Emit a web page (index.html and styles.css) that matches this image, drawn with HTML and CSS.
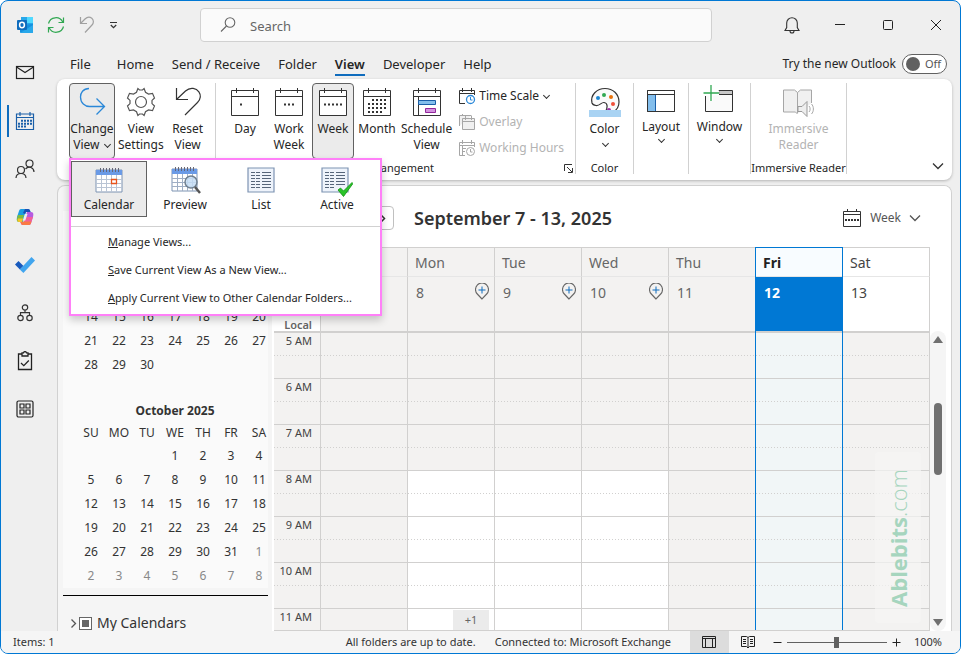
FILE: index.html
```html
<!DOCTYPE html>
<html lang="en">
<head>
<meta charset="utf-8">
<title>Calendar - Outlook</title>
<link rel="stylesheet" href="styles.css">
</head>
<body>
<div class="app">
  <header class="titlebar">
    <div class="quick">
      <svg class="i18" viewBox="0 0 18 18"><rect x="5" y="1" width="12" height="12" fill="#28a8ea"/><rect x="11" y="1" width="6" height="6" fill="#50d9ff"/><rect x="5" y="7" width="6" height="6" fill="#0364b8"/><path d="M4 9l13-1v8a1 1 0 0 1-1 1H5a1 1 0 0 1-1-1z" fill="#1490df"/><path d="M4 17l13-8v7a1 1 0 0 1-1 1z" fill="#28a8ea"/><rect x="1" y="4" width="10" height="10" rx="1" fill="#0f6cbd"/><ellipse cx="6" cy="9" rx="2.400" ry="2.700" fill="none" stroke="#fff" stroke-width="1.500"/></svg>
      <button class="plain" aria-label="Send and receive"><svg class="i18" viewBox="0 0 18 18" fill="none" stroke="#31a852" stroke-width="1.200"><path d="M1.500 7.500a7.600 7.600 0 0 1 14.200-1.500M16.500 1.500v5h-5M16.500 10.500a7.600 7.600 0 0 1-14.200 1.500M1.500 16.500v-5h5"/></svg></button>
      <button class="plain" aria-label="Undo"><svg class="i18" viewBox="0 0 18 18" fill="none" stroke="#a0a0a0" stroke-width="1.200"><path d="M2.500 1v6.500H9M2.500 7.500L7 3c2.500-2.500 5-2.200 6.800-.8 2 1.700 2.100 4.800.2 6.800L7 16.500"/></svg></button>
      <button class="plain" aria-label="Customize"><svg class="i9" viewBox="0 0 9 9" fill="none" stroke="#333" stroke-width="1.200"><path d="M1 1.500h7M1.800 4l2.700 2.700L7.200 4"/></svg></button>
    </div>
    <label class="search">
      <svg class="i18" viewBox="0 0 18 18" fill="none" stroke="#666" stroke-width="1.100"><circle cx="11" cy="6.500" r="4.800"/><path d="M7.500 10L2 15.500"/></svg>
      <input type="text" placeholder="Search" aria-label="Search">
    </label>
    <div class="window-buttons">
      <button aria-label="Notifications"><svg class="i18" viewBox="0 0 18 18" fill="none" stroke="#333" stroke-width="1.100"><path d="M2 14.500h14L14.300 11.500V7a5.300 5.300 0 0 0-10.600 0v4.500zM7 15a2 2 0 0 0 4 0"/></svg></button>
      <button aria-label="Minimize"><svg class="i12" viewBox="0 0 12 12" stroke="#222"><path d="M1 5.500h10"/></svg></button>
      <button aria-label="Maximize"><svg class="i12" viewBox="0 0 12 12" stroke="#222" fill="none"><rect x="1.500" y="1.500" width="9" height="9" rx="1"/></svg></button>
      <button aria-label="Close"><svg class="i12" viewBox="0 0 12 12" stroke="#222"><path d="M1 1l10 10M11 1L1 11"/></svg></button>
    </div>
  </header>

  <div class="shell">
    <nav class="rail" aria-label="Modules">
      <button aria-label="Mail"><svg class="i20" viewBox="0 0 20 20" fill="none" stroke="#222" stroke-width="1.200"><rect x="1.500" y="3.500" width="17" height="12"/><path d="M1.500 4l8.500 5.500 8.500-5.500"/></svg></button>
      <button class="current" aria-label="Calendar"><svg class="i20" viewBox="0 0 20 20" fill="none" stroke="#1a5fa8" stroke-width="1.200"><path d="M1.500 3h17v15.500h-17zM1.500 6.500h17M5 1v4M15 1v4"/><path stroke-width="2" stroke-dasharray="2 1" d="M6 9.800h11M3 12.800h14M3 15.500h8"/></svg></button>
      <button aria-label="People"><svg class="i20" viewBox="0 0 20 20" fill="none" stroke="#333" stroke-width="1.200"><circle cx="6" cy="11" r="3.500"/><circle cx="14.500" cy="4.500" r="3.500"/><path d="M1 19c.3-6 9.700-6 10 0M10.500 10c3-3.500 8.500-1.500 8.500 3"/></svg></button>
      <button aria-label="Copilot"><svg class="i20" viewBox="0 0 20 20"><path d="M6 2h7c1.500 0 2 1 2.500 3H11L8 15H4.500C1 15 2 11 2 10L4 4c.4-1.300 1-2 2-2z" fill="#1b9de2"/><path d="M3 8h6l-2 7H4c-3 0-2.500-3-1-7z" fill="#7dbb42"/><path d="M3 11.500h5L7 15H4c-1.500 0-2-2-1-3.500z" fill="#f5c529"/><path d="M10 2h3c1.500 0 2 1 2.500 3H11l-1 2-2-1z" fill="#1a4fb5"/><path d="M12 5h4c3 0 2.500 3 2 5l-2 6c-.5 1.500-1 2-2.500 2H8c-1.500 0-2-1-2.500-3H9z" fill="#b65be0"/><path d="M11 10h7l-2 6c-.5 1.500-1 2-2.500 2H8c-1.500 0-2-1-2.500-3H9z" fill="#f0609a"/><path d="M8.500 14.500h8c-.6 2.500-1.300 3.500-3 3.500H8c-1.500 0-2-1-2.500-3z" fill="#fa7a45"/><path d="M9.800 7h2.700l-2.200 6.500H7.800z" fill="#efefef"/></svg></button>
      <button aria-label="To Do"><svg class="i20" viewBox="0 0 20 20"><path d="M0 9.500l3.500-3.600 5 5-3.600 3.600z" fill="#185abd"/><path d="M4.800 14.400L16.500 2 20 5.500 8.400 18z" fill="#41a5ee"/></svg></button>
      <button aria-label="Org Explorer"><svg class="i20" viewBox="0 0 20 20" fill="none" stroke="#333" stroke-width="1.200"><circle cx="10" cy="4.500" r="2.700"/><circle cx="5.500" cy="15" r="2.700"/><circle cx="14.500" cy="15" r="2.700"/><path d="M10 7.200v2.500M5.500 12.300V9.700h9v2.600"/></svg></button>
      <button aria-label="Tasks"><svg class="i20" viewBox="0 0 20 20" fill="none" stroke="#222" stroke-width="1.300"><path d="M7 3H3.500v15.500h13V3H13M7 1.800h1.500c.5-1.600 2.500-1.600 3 0H13V5H7zM6 12l2.800 2.700 5-5.200"/></svg></button>
      <button aria-label="More apps"><svg class="i20" viewBox="0 0 20 20" fill="none" stroke="#222" stroke-width="1.200"><rect x="2" y="2" width="16" height="16" rx="1.500"/><path d="M5 5h4v4H5zM11 5h4v4h-4zM5 11h4v4H5zM11 11h4v4h-4z"/></svg></button>
    </nav>

    <main class="main">
      <div class="tabs">
        <nav class="tab-list" aria-label="Ribbon tabs">
          <a class="first" href="#">File</a><a href="#">Home</a><a href="#">Send / Receive</a><a href="#">Folder</a><a class="active" href="#">View</a><a href="#">Developer</a><a href="#">Help</a>
        </nav>
        <label class="try">Try the new Outlook <span class="toggle"><input type="checkbox" role="switch" aria-label="Try the new Outlook"><span>Off</span></span></label>
      </div>

      <section class="ribbon" aria-label="View ribbon">
        <div class="group g-view">
          <div class="tools">
            <div class="drop">
              <button class="tool on"><svg class="i32" viewBox="0 0 32 32" fill="none" stroke="#2b88d8" stroke-width="1.300"><path d="M13 3.500C7 3.500 4.500 8 4.500 12c0 6 4.500 9.500 9 9.500h15M20.500 13.500l8 8-8 8"/></svg><span>Change<br>View <i class="chev"></i></span></button>
              <div class="menu">
                <div class="tiles">
                  <button class="tile sel"><svg class="i32" viewBox="0 0 32 32"><path d="M3 5h26v22H3z" fill="#fff" stroke="#7d93b2"/><path d="M3 5h26v5H3z" fill="#6a9ae6"/><path d="M3 14.500h26M3 18.500h26M3 22.500h26M8.500 10v17M13.500 10v17M18.500 10v17M23.500 10v17" stroke="#b9c4d4" fill="none"/><path d="M7.500 3v4M10.500 3v4M13.500 3v4M16.500 3v4M19.500 3v4M22.500 3v4M25.500 3v4" stroke="#667"/><path d="M18.500 14.500h5v4h-5z" fill="#fff" stroke="#e8541c" stroke-width="1.300"/></svg>Calendar</button>
                  <button class="tile"><svg class="i32" viewBox="0 0 32 32"><path d="M3 4h25v22H3z" fill="#fff" stroke="#7d93b2"/><path d="M3 4h25v5H3z" fill="#6a9ae6"/><path d="M3 13.500h25M3 17.500h25M3 21.500h25M8.500 9v17M13.500 9v17M18.500 9v17M23.500 9v17" stroke="#9faec4" fill="none"/><path d="M6.500 2v4M9.500 2v4M12.500 2v4M15.500 2v4M18.500 2v4M21.500 2v4M24.500 2v4" stroke="#667"/><circle cx="22" cy="17" r="6" fill="#c5ddf5" fill-opacity=".85" stroke="#71808f" stroke-width="1.500"/><path d="M26 22l5 6" stroke="#555" stroke-width="2.500"/></svg>Preview</button>
                  <button class="tile"><svg class="i32" viewBox="0 0 32 32"><path d="M3 3h26v24H3z" fill="#eef3fb" stroke="#7d93b2" stroke-width="1.200"/><path d="M6 7.500h9M6 10.500h9M6 13.500h9M6 16.500h9M6 19.500h9M6 22.500h9" stroke="#56657a" stroke-dasharray="4 1"/><path d="M17 7.500h9M17 10.500h9M17 13.500h9M17 16.500h9M17 19.500h9M17 22.500h9" stroke="#56657a"/></svg>List</button>
                  <button class="tile"><svg class="i32" viewBox="0 0 32 32"><path d="M1 3h26v24H1z" fill="#eef3fb" stroke="#7d93b2" stroke-width="1.200"/><path d="M4 7.500h9M4 10.500h9M4 13.500h9M4 16.500h9M4 19.500h9M4 22.500h9" stroke="#56657a" stroke-dasharray="4 1"/><path d="M15 7.500h9M15 10.500h9M15 13.500h9M15 16.500h9M15 19.500h9" stroke="#56657a"/><path d="M17 25l2.500-2 3 3L31 17.500l1 1-9.500 13z" fill="#29c429" stroke="#119011" stroke-width=".8"/></svg>Active</button>
                </div>
                <button class="item"><u>M</u>anage Views...</button>
                <button class="item"><u>S</u>ave Current View As a New View...</button>
                <button class="item"><u>A</u>pply Current View to Other Calendar Folders...</button>
              </div>
            </div>
            <button class="tool"><svg class="i32" viewBox="0 0 32 32" fill="none" stroke="#555" stroke-width="1.200"><circle cx="16" cy="17" r="5.500"/><path d="M12.900 3.500L11.500 7.300L8.500 9L4.500 8.300L2.500 13L5 15.400V18.600L2.500 21L4.500 25.700L8.500 25L11.500 26.700L12.900 30.500L14.500 29H17.500L19.100 30.500L20.500 26.700L23.500 25L27.500 25.700L29.500 21L27 18.600V15.400L29.500 13L27.500 8.300L23.500 9L20.500 7.300L19.100 3.500L17.500 5H14.500z"/></svg><span>View<br>Settings</span></button>
            <button class="tool"><svg class="i32" viewBox="0 0 32 32" fill="none" stroke="#333" stroke-width="1.200"><path d="M4.500 3v11.500H16M4.500 14.500l9-8.500c5-4.500 11-2.600 13.400.8 2.500 3.700 1.300 7.700-1.400 10.700L13 30"/></svg><span>Reset<br>View</span></button>
          </div>
        </div>

        <div class="group g-arrange">
          <div class="tools">
            <button class="tool"><svg class="i32" viewBox="0 0 32 32" fill="none" stroke="#333"><path fill="#fff" d="M2.500 5.500h27v25h-27z"/><path d="M2.500 11.500h27M7.500 3v5M24.500 3v5"/><path stroke-width="2" d="M11 19.500h2"/></svg><span>Day</span></button>
            <button class="tool"><svg class="i32" viewBox="0 0 32 32" fill="none" stroke="#333"><path fill="#fff" d="M2.500 5.500h27v25h-27z"/><path d="M2.500 11.500h27M7.500 3v5M24.500 3v5"/><path stroke-width="2" stroke-dasharray="2 2" d="M11 19.500h10"/></svg><span>Work<br>Week</span></button>
            <button class="tool on"><svg class="i32" viewBox="0 0 32 32" fill="none" stroke="#333"><path fill="#fff" d="M2.500 5.500h27v25h-27z"/><path d="M2.500 11.500h27M7.500 3v5M24.500 3v5"/><path stroke-width="2" stroke-dasharray="2 2" d="M7 19.500h18"/></svg><span>Week</span></button>
            <button class="tool"><svg class="i32" viewBox="0 0 32 32" fill="none" stroke="#333"><path fill="#fff" d="M2.500 5.500h27v25h-27z"/><path d="M2.500 11.500h27M7.500 3v5M24.500 3v5"/><path stroke-width="2" stroke-dasharray="2 2" d="M11 15h14M7 19h18M7 23h18M7 27h14"/></svg><span>Month</span></button>
            <button class="tool wide"><svg class="i32" viewBox="0 0 32 32" fill="none" stroke="#333"><path fill="#fff" d="M2.500 5.500h27v25h-27z"/><path d="M2.500 11.500h27M7.500 3v5M24.500 3v5M7.500 12v18"/><path d="M7.500 15.500h17v4h-17z" fill="#83beec" stroke="#1a5fa8"/><path d="M14.500 23.500h10v4h-10z" fill="#d392de" stroke="#92279c"/></svg><span>Schedule<br>View</span></button>
            <div class="stack">
              <button><svg class="i18" viewBox="0 0 18 18" fill="none" stroke="#333"><path d="M7 16.500H1.500v-13h15V8M1.500 6.500h15M4.500 1v4M13.500 1v4"/><circle cx="12.500" cy="12.500" r="4" fill="#fff" stroke="#2b88d8" stroke-width="1.300"/><path d="M12.500 10v3h2" stroke="#2b88d8"/></svg>Time Scale <i class="chev"></i></button>
              <button disabled><svg class="i18" viewBox="0 0 18 18" fill="#f0f0f0" stroke="#a6a6a6"><path d="M1.500 13V2.500h12"/><path d="M4.500 5.500h12v11h-12zM4.500 8.500h12M7.500 3v4M13.500 3v4M4.500 1v2"/></svg>Overlay</button>
              <button disabled><svg class="i18" viewBox="0 0 18 18" fill="none" stroke="#a6a6a6"><path d="M7 16.500H1.500v-13h15V8M1.500 6.500h15M4.500 1v4M13.500 1v4M4.500 7v9M5 9.500h3M5 12.500h2"/><circle cx="12.500" cy="12.500" r="4" fill="#fff"/><path d="M12.500 10v3h2"/></svg>Working Hours</button>
            </div>
          </div>
          <div class="caption">Arrangement<button class="plain launch" aria-label="Arrangement options"><svg class="i9" viewBox="0 0 9 9" fill="none" stroke="#333"><path d="M.5 7V.5H8M3 3l5 5M8.500 4v4.500H4"/></svg></button></div>
        </div>

        <div class="group g-color">
          <div class="tools">
            <button class="tool"><svg class="i32" viewBox="0 0 32 32"><path d="M3 18C1 10 8 3.500 16 3.500S30 9 30 17c0 5-2 8-6 10h-8c3-4 3-9-1-9.500-3-.3-4 3.500-8 3-2-.3-3.500-1-4-2.500z" fill="#fafafa" stroke="#333" stroke-width="1.200"/><circle cx="9" cy="13" r="2" fill="#1e88d2"/><circle cx="15" cy="10" r="2" fill="#31a852"/><circle cx="22" cy="12" r="2" fill="#e8730c"/><circle cx="24" cy="19" r="2" fill="#f0503a"/><circle cx="20" cy="25" r="2" fill="#9a30a8"/><path d="M0 25h32v8H0z" fill="#a9d3f3"/></svg><span>Color</span><i class="chev"></i></button>
          </div>
          <div class="caption">Color</div>
        </div>
        <div class="group g-layout">
          <div class="tools">
            <button class="tool short"><svg class="i32" viewBox="0 0 32 32" fill="#fff" stroke="#333"><path d="M2.500 5.500h27v21h-27z"/><path d="M3 9.500h7.500v17H3z" fill="#83beec" stroke="none"/><path d="M2.500 9.500h27M2.500 5.500h27v21h-27z" fill="none"/><path d="M10.500 10v16" stroke="#1a5fa8"/></svg><span>Layout</span><i class="chev"></i></button>
          </div>
        </div>
        <div class="group g-window">
          <div class="tools">
            <button class="tool short"><svg class="i32" viewBox="0 0 32 32" fill="none" stroke="#333"><path d="M2.500 11v15.500h27v-21H16v4h13.500" fill="#fafafa"/><path d="M16.500 6h12.500v3H16.500z" fill="#c8c8c8" stroke="none"/><path d="M8 0v16M0 8h16" stroke="#fff" stroke-width="4"/><path d="M8 0v16M.5 8H16" stroke="#31a852" stroke-width="1.300"/></svg><span>Window</span><i class="chev"></i></button>
          </div>
        </div>
        <div class="group g-reader">
          <div class="tools">
            <button class="tool" disabled><svg class="i32" viewBox="0 0 32 32" fill="#f0f0f0" stroke="#a6a6a6"><path d="M15.500 29l-2-2H1.500v-22h11l3 2.500 3-2.500h11v13M15.500 7.500V28"/><path d="M16 21.500h4l5-5v15l-5-5h-4z" fill="#eee" stroke="#999"/><path d="M27 21c1.500 1.500 1.500 4.500 0 6M29.500 19c2.500 2.500 2.500 7.500 0 10" fill="none"/></svg><span>Immersive<br>Reader</span></button>
          </div>
          <div class="caption">Immersive Reader</div>
        </div>
        <button class="plain collapse" aria-label="Ribbon display options"><svg class="i12" viewBox="0 0 12 12" fill="none" stroke="#333" stroke-width="1.300"><path d="M1 3.500l5 5 5-5"/></svg></button>
      </section>

      <div class="workspace">
        <aside class="side">
          <div class="minis">
            <table class="mini" aria-label="September 2025">
              <tbody>
                <tr><td>14</td><td>15</td><td>16</td><td>17</td><td>18</td><td>19</td><td>20</td></tr>
                <tr><td>21</td><td>22</td><td>23</td><td>24</td><td>25</td><td>26</td><td>27</td></tr>
                <tr><td>28</td><td>29</td><td>30</td><td></td><td></td><td></td><td></td></tr>
              </tbody>
            </table>
            <table class="mini">
              <caption>October 2025</caption>
              <thead><tr><th>SU</th><th>MO</th><th>TU</th><th>WE</th><th>TH</th><th>FR</th><th>SA</th></tr></thead>
              <tbody>
                <tr><td></td><td></td><td></td><td>1</td><td>2</td><td>3</td><td>4</td></tr>
                <tr><td>5</td><td>6</td><td>7</td><td>8</td><td>9</td><td>10</td><td>11</td></tr>
                <tr><td>12</td><td>13</td><td>14</td><td>15</td><td>16</td><td>17</td><td>18</td></tr>
                <tr><td>19</td><td>20</td><td>21</td><td>22</td><td>23</td><td>24</td><td>25</td></tr>
                <tr><td>26</td><td>27</td><td>28</td><td>29</td><td>30</td><td>31</td><td class="out">1</td></tr>
                <tr><td class="out">2</td><td class="out">3</td><td class="out">4</td><td class="out">5</td><td class="out">6</td><td class="out">7</td><td class="out">8</td></tr>
              </tbody>
            </table>
          </div>
          <label class="mycals"><svg class="i9" viewBox="0 0 9 9" fill="none" stroke="#555" stroke-width="1.300"><path d="M2.500 0.500l4 4-4 4"/></svg><input type="checkbox" aria-checked="mixed">My Calendars</label>
        </aside>

        <section class="cal">
          <div class="cal-head">
            <button class="next" aria-label="Next week"><svg class="i9" viewBox="0 0 9 9" fill="none" stroke="#333" stroke-width="1.500"><path d="M2.500 0.500l4 4-4 4"/></svg></button>
            <h1>September 7 - 13, 2025</h1>
            <button class="plain range"><svg class="i20" viewBox="0 0 20 20" fill="none" stroke="#333"><path d="M1.500 3.500h17v15h-17zM1.500 6.500h17M5.500 1v3M14.500 1v3"/><path stroke-width="2" stroke-dasharray="2 1" d="M3 12h14"/></svg>Week<svg class="i12" viewBox="0 0 12 12" fill="none" stroke="#555" stroke-width="1.300"><path d="M1 3.500l5 5 5-5"/></svg></button>
          </div>
          <div class="cal-body">
            <div class="grid">
              <div class="times">
                <div class="zone">Local</div>
                <div class="hour">5 AM</div><div class="hour">6 AM</div><div class="hour">7 AM</div><div class="hour">8 AM</div><div class="hour">9 AM</div><div class="hour">10 AM</div><div class="hour">11 AM</div>
              </div>
              <div class="day"><div class="name"></div><div class="date"></div><div class="hour"></div><div class="hour"></div><div class="hour"></div><div class="hour"></div><div class="hour"></div><div class="hour"></div><div class="hour"></div></div>
              <div class="day"><div class="name">Mon</div><div class="date">8<svg class="pin" viewBox="0 0 14 17" fill="none" stroke="#666"><path d="M7 16L2.300 11a6.500 6.500 0 1 1 9.400 0z" stroke-width="1.100"/><path d="M7 3.500v7M3.500 7h7" stroke="#0f6cbd"/></svg></div><div class="hour"></div><div class="hour"></div><div class="hour"></div><div class="hour work"></div><div class="hour work"></div><div class="hour work"></div><div class="hour work"></div><button class="more">+1</button></div>
              <div class="day"><div class="name">Tue</div><div class="date">9<svg class="pin" viewBox="0 0 14 17" fill="none" stroke="#666"><path d="M7 16L2.300 11a6.500 6.500 0 1 1 9.400 0z" stroke-width="1.100"/><path d="M7 3.500v7M3.500 7h7" stroke="#0f6cbd"/></svg></div><div class="hour"></div><div class="hour"></div><div class="hour"></div><div class="hour work"></div><div class="hour work"></div><div class="hour work"></div><div class="hour work"></div></div>
              <div class="day"><div class="name">Wed</div><div class="date">10<svg class="pin" viewBox="0 0 14 17" fill="none" stroke="#666"><path d="M7 16L2.300 11a6.500 6.500 0 1 1 9.400 0z" stroke-width="1.100"/><path d="M7 3.500v7M3.500 7h7" stroke="#0f6cbd"/></svg></div><div class="hour"></div><div class="hour"></div><div class="hour"></div><div class="hour work"></div><div class="hour work"></div><div class="hour work"></div><div class="hour work"></div></div>
              <div class="day"><div class="name">Thu</div><div class="date">11</div><div class="hour"></div><div class="hour"></div><div class="hour"></div><div class="hour"></div><div class="hour"></div><div class="hour"></div><div class="hour"></div></div>
              <div class="day today"><div class="name">Fri</div><div class="date">12</div><div class="hour"></div><div class="hour"></div><div class="hour"></div><div class="hour"></div><div class="hour"></div><div class="hour"></div><div class="hour"></div></div>
              <div class="day future"><div class="name">Sat</div><div class="date">13</div><div class="hour"></div><div class="hour"></div><div class="hour"></div><div class="hour"></div><div class="hour"></div><div class="hour"></div><div class="hour"></div></div>
            </div>
            <div class="scroll"><i class="up"></i><i class="thumb"></i><i class="down"></i></div>
            <div class="mark"><span><b>Ablebits</b>.com</span></div>
          </div>
        </section>
      </div>
    </main>
  </div>

  <footer class="status">
    <span class="items">Items: 1</span>
    <span>All folders are up to date.</span>
    <span class="conn">Connected to: Microsoft Exchange</span>
    <button class="view on" aria-label="Normal view"><svg class="i16" viewBox="0 0 16 16" fill="none" stroke="#222"><path d="M1.500 2.500h13v11h-13zM1.500 4.500h13M4.500 4.500v9M11.500 4.500v9"/></svg></button>
    <button class="view" aria-label="Reading view"><svg class="i16" viewBox="0 0 16 16" fill="none" stroke="#222"><path d="M8 3.500L6.500 2.500h-5v10h5L8 14l1.500-1.500h5v-10h-5zV14M3 5.500h3M3 7.500h3M3 9.500h3M10 5.500h3M10 7.500h3M10 9.500h3"/></svg></button>
    <button class="plain zb" aria-label="Zoom out"><svg class="i9" viewBox="0 0 9 9" stroke="#222"><path d="M.5 4.500h8"/></svg></button>
    <input class="zoom" type="range" min="0" max="200" value="100" aria-label="Zoom">
    <button class="plain zb" aria-label="Zoom in"><svg class="i9" viewBox="0 0 9 9" stroke="#222"><path d="M.5 4.500h8M4.500 .5v8"/></svg></button>
    <span class="pct">100%</span>
  </footer>
</div>
</body>
</html>
```
FILE: styles.css
```css
* { box-sizing: border-box; }
body { margin: 0; background: #fff; color: #333; font: 12px/16px "Noto Sans", "Open Sans", sans-serif; }
button, input { font: inherit; color: inherit; }
button { background: none; border: 0; padding: 0; margin: 0; }
a { color: inherit; text-decoration: none; }
svg { display: block; flex: none; }
.i9 { width: 9px; height: 9px; }
.i12 { width: 12px; height: 12px; }
.i16 { width: 16px; height: 16px; }
.i18 { width: 18px; height: 18px; }
.i20 { width: 20px; height: 20px; }
.i32 { width: 32px; height: 32px; }

.app { height: 100vh; display: flex; flex-direction: column; background: #efefef; border: 1px solid #0078d4; border-radius: 8px; overflow: hidden; }

/* Title bar */
.titlebar { display: flex; align-items: center; height: 48px; flex: none; }
.quick { display: flex; align-items: center; gap: 13px; padding-left: 15px; width: 199px; }
.search { flex: 1; max-width: 512px; height: 34px; margin-right: auto; display: flex; align-items: center; gap: 13px; padding-left: 18px; background: #fafafa; border: 1px solid #d1d1d1; border-radius: 4px; }
.search input { flex: 1; min-width: 0; border: 0; background: none; padding: 1px 0 0; font-size: 13px; outline: 0; }
.search input::placeholder { color: #666; opacity: 1; }
.window-buttons { display: flex; }
.window-buttons button { width: 48px; height: 48px; display: grid; place-items: center; }

.shell { flex: 1; min-height: 0; display: flex; }

/* Module rail */
.rail { width: 56px; flex: none; display: flex; flex-direction: column; }
.rail button { width: 48px; height: 48px; display: grid; place-items: center; position: relative; }
.rail .current::before { content: ""; position: absolute; left: 6px; top: 8px; width: 2px; height: 32px; background: #0f6cbd; }

.main { flex: 1; min-width: 0; display: flex; flex-direction: column; padding-right: 8px; }

/* Ribbon tabs */
.tabs { display: flex; justify-content: space-between; height: 30px; flex: none; font-size: 13px; color: #262626; padding: 0 5px 0 13px; }
.tab-list { display: flex; gap: 18px; }
.tab-list a { line-height: 30px; }
.tab-list .first { margin-right: 8px; }
.tab-list .active { font-weight: 600; position: relative; }
.tab-list .active::after { content: ""; position: absolute; left: 0; right: 0; bottom: 3px; height: 2px; background: #0f6cbd; }
.try { display: flex; align-items: center; gap: 6px; font-size: 12px; }
.toggle { display: flex; align-items: center; gap: 5px; width: 45px; height: 20px; padding-left: 3px; border: 1px solid #616161; border-radius: 10px; background: #fff; font-size: 11px; color: #555; }
.toggle input { appearance: none; width: 14px; height: 14px; margin: 0; border-radius: 7px; background: #616161; }

/* Ribbon */
.ribbon { display: flex; align-items: stretch; height: 101px; flex: none; padding: 4px 0 6px 12px; background: #fff; border-radius: 8px; box-shadow: 0 1px 3px rgba(0,0,0,.25); color: #262626; }
.group { display: flex; flex-direction: column; border-right: 1px solid #d1d1d1; }
.g-view { width: 147px; }
.g-arrange { width: 360px; padding-left: 8px; }
.g-color { width: 58px; }
.g-layout { width: 55px; }
.g-window { width: 62px; }
.g-reader { width: 96px; }
.tools { flex: 1; min-height: 0; display: flex; gap: 2px; }
.g-color .tools, .g-layout .tools, .g-window .tools, .g-reader .tools { justify-content: center; }
.tool { min-width: 42px; height: 76px; display: flex; flex-direction: column; align-items: center; gap: 4px; border: 1px solid transparent; padding-top: 1px; border-radius: 4px; line-height: 16px; flex: none; }
.tool.on { background: #ebebeb; border-color: #616161; }
.tool.short { gap: 2px; }
.drop { position: relative; }
.drop .tool { width: 46px; }
.chev { display: inline-block; width: 5px; height: 5px; margin: 0 1px 2px 2px; border: solid #333; border-width: 0 1px 1px 0; transform: rotate(45deg); }
.tool:disabled, .stack button:disabled { color: #b3b3b3; }
.stack { display: flex; flex-direction: column; padding-left: 3px; }
.stack button { flex: none; height: 26px; display: flex; align-items: center; gap: 3px; white-space: nowrap; }
.wide { min-width: 52px; }
.caption { position: relative; height: 12px; text-align: center; font-size: 11px; line-height: 12px; white-space: nowrap; }
.launch { position: absolute; right: 2px; top: 2px; }
.collapse { margin: auto 8px 2px auto; }

/* Change View menu */
.menu { position: absolute; z-index: 5; left: 0; top: 75px; width: 313px; padding: 1px 0 2px; background: #fff; border: 2px solid #ff80f8; box-shadow: 0 4px 8px rgba(0,0,0,.2); }
.tiles { display: flex; padding-bottom: 9px; border-bottom: 1px solid #d1d1d1; margin-bottom: 1px; }
.tile { width: 76px; height: 56px; padding-top: 3px; border: 1px solid transparent; display: flex; flex-direction: column; align-items: center; line-height: 16px; }
.tile.sel { background: #ebebeb; border-color: #616161; }
.item { display: block; width: 100%; height: 28px; padding-left: 37px; text-align: left; white-space: nowrap; font-size: 11px; }

/* Workspace */
.workspace { flex: 1; min-height: 0; display: flex; margin-top: 5px; background: #f5f5f5; border: 1px solid #d1d1d1; border-bottom: 0; border-radius: 8px 8px 0 0; overflow: hidden; }
.side { width: 214px; flex: none; }
.minis { margin: 25px 4px 0 5px; padding: 94px 0 0 14px; background: #fafafa; }
.mini { width: 196px; border-collapse: collapse; table-layout: fixed; text-align: center; }
.mini caption { height: 22px; font-weight: 700; line-height: 22px; }
.mini th, .mini td { padding: 0; height: 24px; font-weight: 400; }
.mini th { height: 22px; }
.mini .out { color: #888; }
.mini + .mini { margin-top: 23px; }
.mycals { display: flex; align-items: center; margin: 7px 4px 0 5px; border-top: 1px solid #000; padding: 17px 0 0 6px; font-size: 14px; line-height: 20px; }
.mycals input { appearance: none; width: 13px; height: 13px; margin: 0 5px 0 1px; border: 1px solid #666; background: #666; box-shadow: inset 0 0 0 2px #fff; }

.cal { flex: 1; min-width: 0; display: flex; flex-direction: column; background: #fff; padding-left: 2px; }
.cal-head { display: flex; align-items: center; height: 61px; flex: none; padding: 3px 30px 0 96px; }
.next { width: 24px; height: 24px; border: 1px solid #c0c0c0; border-radius: 4px; display: grid; place-items: center; }
.cal-head h1 { flex: 1; margin: 0 0 0 20px; font-size: 18px; line-height: 24px; font-weight: 600; }
.range { display: flex; align-items: center; gap: 8px; color: #555; }
.cal-body { position: relative; flex: 1; min-height: 0; display: flex; overflow: hidden; }
.grid { flex: 1; min-width: 0; display: grid; grid-template-columns: 47px repeat(7, minmax(0, 1fr)); align-content: start; overflow: hidden; border-bottom: 1px solid #d1d0cf; }
.times { text-align: right; }
.zone { height: 86px; padding: 70px 8px 0 0; border-bottom: 2px solid #d1d0cf; border-right: 1px solid #d1d0cf; font-weight: 600; font-size: 11px; color: #666; }
.hour { height: 46px; border: solid #d1d0cf; border-width: 0 1px 1px 0; background: repeating-linear-gradient(90deg, #d1d0cf 0 1px, transparent 1px 3px) 0 22px / 100% 1px no-repeat #f3f2f1; }
.hour.work { background-color: #fff; }
.times .hour { padding-right: 8px; font-size: 11px; color: #444; }
.day { position: relative; color: #666; }
.name { height: 30px; padding-left: 7px; border: solid #d1d0cf; border-width: 1px 1px 1px 0; border-bottom-color: #e6e6e6; font-size: 14px; line-height: 29px; background: #f3f2f1; }
.date { display: flex; justify-content: space-between; align-items: flex-start; height: 56px; padding: 6px 5px 0 8px; border: solid #d1d0cf; border-width: 0 1px 2px 0; font-size: 14px; line-height: 20px; background: #f3f2f1; }
.pin { width: 14px; height: 17px; }
.future { color: #444; }
.future .name, .future .date { background: #fff; }
.today::before { content: ""; position: absolute; z-index: 1; inset: 0 0 0 -1px; border: solid #0078d4; border-width: 1px 1px 0; }
.today .name { background: #f8fcff; color: #222; font-weight: 700; }
.today .date { background: #0078d4; color: #fff; font-weight: 700; }
.today .hour { background-color: #f1f6f7; }
.more { position: absolute; right: 6px; bottom: 25px; width: 36px; height: 20px; background: #ebebeb; color: #666; font-size: 11px; }
.scroll { width: 16px; margin: 84px 5px 0 0; border-radius: 8px; background: #f5f5f5; display: flex; flex-direction: column; align-items: center; padding: 5px 0; }
.up, .down { border: 5px solid transparent; border-top: 0; border-bottom: 7px solid #707070; }
.down { border: 5px solid transparent; border-bottom: 0; border-top: 7px solid #707070; margin-top: auto; }
.thumb { width: 8px; height: 72px; margin-top: 60px; border-radius: 4px; background: #707070; }
.mark { position: absolute; right: 30px; bottom: 8px; width: 46px; height: 171px; display: grid; place-items: center; background: rgba(245,245,244,.7); color: #a6d5be; font: 300 22px/30px "Open Sans", sans-serif; border-radius: 4px; }
.mark span { writing-mode: vertical-rl; transform: rotate(180deg); }
.mark b { font-weight: 700; }

/* Status bar */
.status { display: flex; align-items: center; height: 22px; flex: none; background: #f5f5f5; padding: 0 18px 0 12px; font-size: 11px; white-space: nowrap; }
.items { margin-right: auto; }
.conn { margin: 0 19px; }
.view { width: 39px; height: 22px; display: grid; place-items: center; }
.view.on { background: #dcdcdc; }
.zb { margin: 0 5px; }
.zoom { appearance: none; width: 100px; height: 14px; margin: 0; background: linear-gradient(#616161, #616161) center / 100% 1px no-repeat; }
.zoom::-webkit-slider-thumb { appearance: none; width: 5px; height: 11px; background: #616161; }
.pct { margin-left: 8px; }
```
